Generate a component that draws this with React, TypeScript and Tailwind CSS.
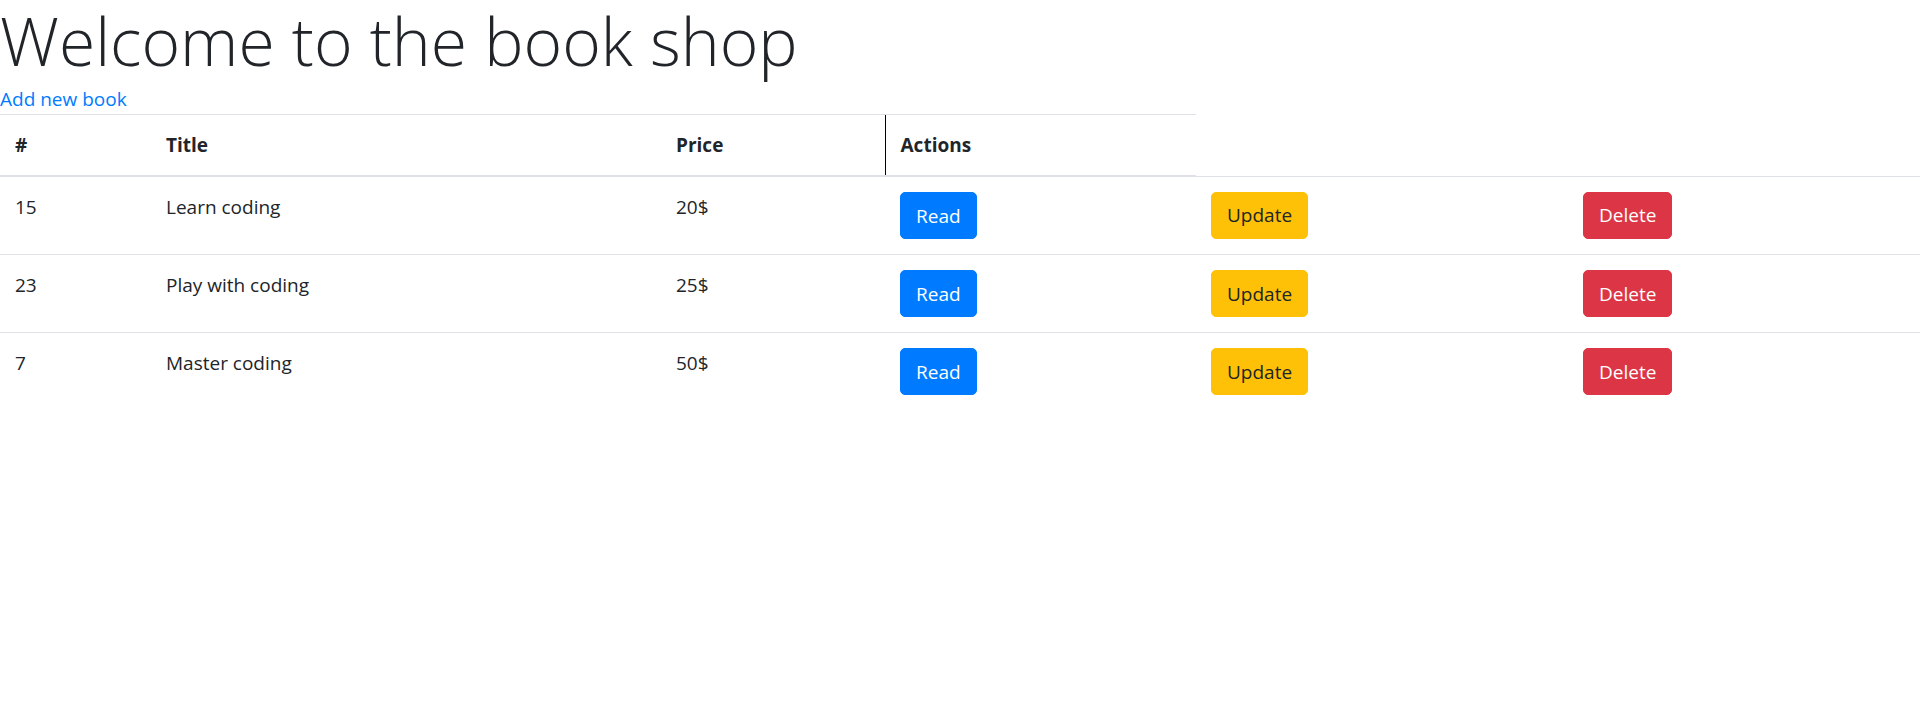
import React from 'react';

interface Book {
  id: number;
  title: string;
  price: string;
}

const books: Book[] = [
  { id: 15, title: 'Learn coding', price: '20$' },
  { id: 23, title: 'Play with coding', price: '25$' },
  { id: 7, title: 'Master coding', price: '50$' },
];

const font = { fontFamily: "'Open Sans', 'Noto Sans', sans-serif" };

const Btn = ({ label, tone }: { label: string; tone: 'read' | 'update' | 'delete' }) => {
  const tones = {
    read: 'bg-[#007bff] border-[#007bff] text-white',
    update: 'bg-[#ffc107] border-[#ffc107] text-[#212529]',
    delete: 'bg-[#dc3545] border-[#dc3545] text-white',
  };
  return (
    <button className={`${tones[tone]} border rounded-[5px] px-[15px] py-[7.5px] text-[19px] leading-[30px]`}>
      {label}
    </button>
  );
};

export default function App() {
  return (
    <div className="bg-white text-[#212529] min-h-[719px]" style={font}>
      <h1 className="text-[66px] font-light leading-[80px] pb-[4px] m-0">Welcome to the book shop</h1>
      <a href="#" className="text-[#007bff] text-[19px] leading-[30px] block w-fit">
        Add new book
      </a>
      <table className="w-full table-fixed border-collapse text-[19px] leading-[30px]">
        <colgroup>
          <col className="w-[151px]" />
          <col className="w-[510px]" />
          <col className="w-[224px]" />
          <col className="w-[311px]" />
          <col className="w-[372px]" />
          <col />
        </colgroup>
        <thead>
          <tr>
            <th className="text-left align-bottom p-[15px] border-t border-b-2 border-[#dee2e6] font-bold">#</th>
            <th className="text-left align-bottom p-[15px] border-t border-b-2 border-[#dee2e6] font-bold">Title</th>
            <th className="text-left align-bottom p-[15px] border-t border-b-2 border-[#dee2e6] font-bold">Price</th>
            <th className="text-left align-bottom p-[15px] border-t border-b-2 border-[#dee2e6] border-l border-l-black font-bold">
              Actions
            </th>
          </tr>
        </thead>
        <tbody>
          {books.map((b) => (
            <tr key={b.id}>
              <td className="align-top p-[15px] border-t border-[#dee2e6]">{b.id}</td>
              <td className="align-top p-[15px] border-t border-[#dee2e6]">{b.title}</td>
              <td className="align-top p-[15px] border-t border-[#dee2e6]">{b.price}</td>
              <td className="align-top p-[15px] border-t border-[#dee2e6]">
                <Btn label="Read" tone="read" />
              </td>
              <td className="align-top p-[15px] border-t border-[#dee2e6]">
                <Btn label="Update" tone="update" />
              </td>
              <td className="align-top p-[15px] border-t border-[#dee2e6]">
                <Btn label="Delete" tone="delete" />
              </td>
            </tr>
          ))}
        </tbody>
      </table>
    </div>
  );
}
